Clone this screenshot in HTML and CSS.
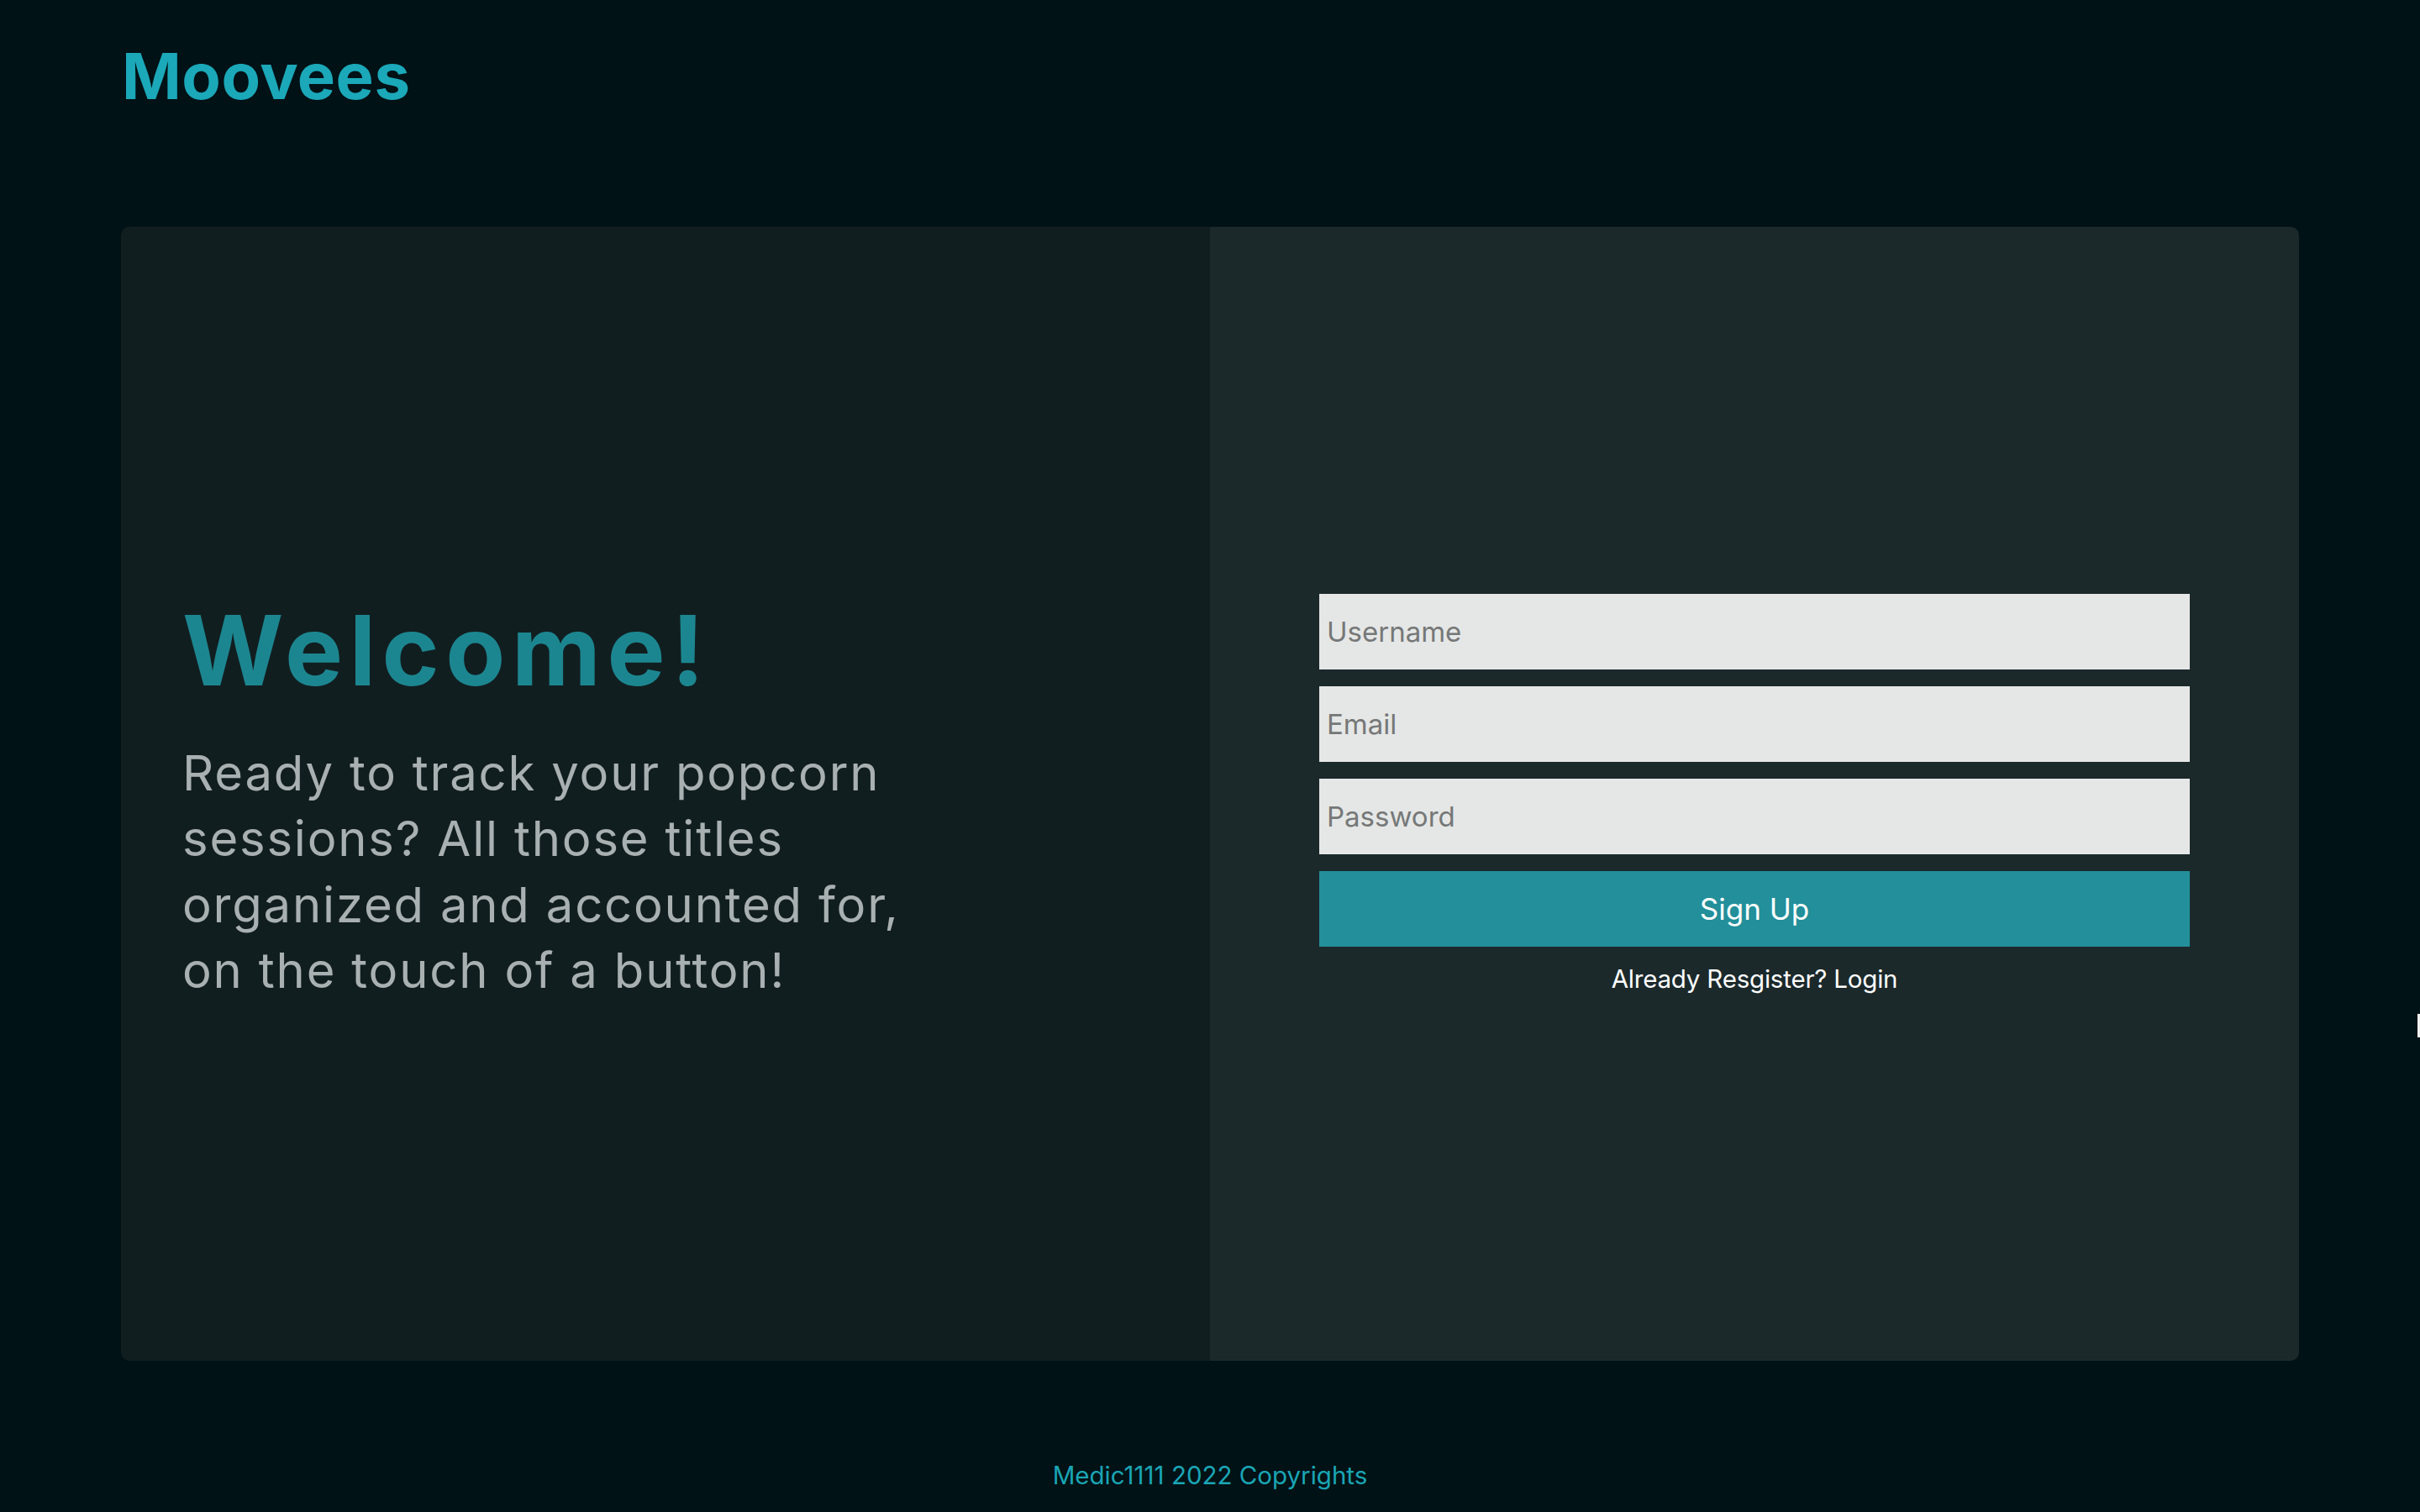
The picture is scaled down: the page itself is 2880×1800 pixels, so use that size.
FILE: index.html
```html
<!DOCTYPE html>
<html lang="en">
<head>
<meta charset="utf-8">
<title>Moovees</title>
<link rel="stylesheet" href="styles.css">
</head>
<body>
<div class="page">
  <header class="header">
    <div class="logo">Moovees</div>
  </header>
  <main class="card">
    <section class="intro">
      <h1 class="welcome">Welcome!</h1>
      <p class="lead">Ready to track your popcorn sessions? All those titles organized and accounted for, on the touch of a button!</p>
    </section>
    <section class="signup">
      <form class="form">
        <input class="field" type="text" placeholder="Username">
        <input class="field" type="email" placeholder="Email">
        <input class="field" type="password" placeholder="Password">
        <button class="submit" type="button">Sign Up</button>
        <a class="login" href="#">Already Resgister? Login</a>
      </form>
    </section>
  </main>
  <footer class="footer">Medic1111 2022 Copyrights</footer>
</div>
<div class="edge-mark"></div>
</body>
</html>
```
FILE: styles.css
```css
* { box-sizing: border-box; }
html, body {
  margin: 0;
  padding: 0;
  background: #011216;
  font-family: Inter, "Noto Sans", sans-serif;
}
.page {
  display: flex;
  flex-direction: column;
  height: 1800px;
}
.header {
  height: 270px;
  padding: 52px 144px 0 145px;
}
.logo {
  font-size: 76px;
  line-height: 1;
  font-weight: 700;
  letter-spacing: 0.5px;
  color: #1ba8b9;
}
.card {
  margin: 0 144px;
  height: 1350px;
  display: grid;
  grid-template-columns: 1fr 1fr;
  border-radius: 10px;
  overflow: hidden;
}
.intro {
  background: #111e20;
  display: flex;
  flex-direction: column;
  justify-content: center;
  padding: 20px 0 0 73px;
}
.welcome {
  margin: 0;
  font-size: 116px;
  line-height: 1;
  font-weight: 700;
  letter-spacing: 7.5px;
  color: #1c8690;
}
.lead {
  margin: 49px 0 0;
  max-width: 900px;
  font-size: 58px;
  line-height: 78.5px;
  font-weight: 400;
  letter-spacing: 1.8px;
  color: #a9b0b2;
}
.signup {
  background: #1b292b;
  display: flex;
  align-items: center;
  justify-content: center;
}
.form {
  width: 1036px;
  display: flex;
  flex-direction: column;
  gap: 20px;
}
.field {
  height: 90px;
  border: 0;
  border-radius: 0;
  background: #e5e7e6;
  padding: 0 9px;
  font-family: Inter, "Noto Sans", sans-serif;
  font-size: 33px;
  color: #333;
  outline: none;
}
.field::placeholder { color: #767878; }
.submit {
  height: 90px;
  border: 0;
  background: #228f9a;
  color: #ffffff;
  font-family: Inter, "Noto Sans", sans-serif;
  font-size: 35px;
  cursor: pointer;
}
.login {
  align-self: center;
  font-size: 29.5px;
  line-height: 36px;
  letter-spacing: -0.2px;
  color: #ffffff;
  text-decoration: none;
}
.footer {
  flex: 1;
  padding-top: 118px;
  text-align: center;
  font-size: 29.5px;
  line-height: 36px;
  letter-spacing: 0;
  color: #1aa5b5;
}
.edge-mark {
  position: fixed;
  right: 0;
  top: 1207px;
  width: 3px;
  height: 28px;
  background: #f0f0f0;
}
```
